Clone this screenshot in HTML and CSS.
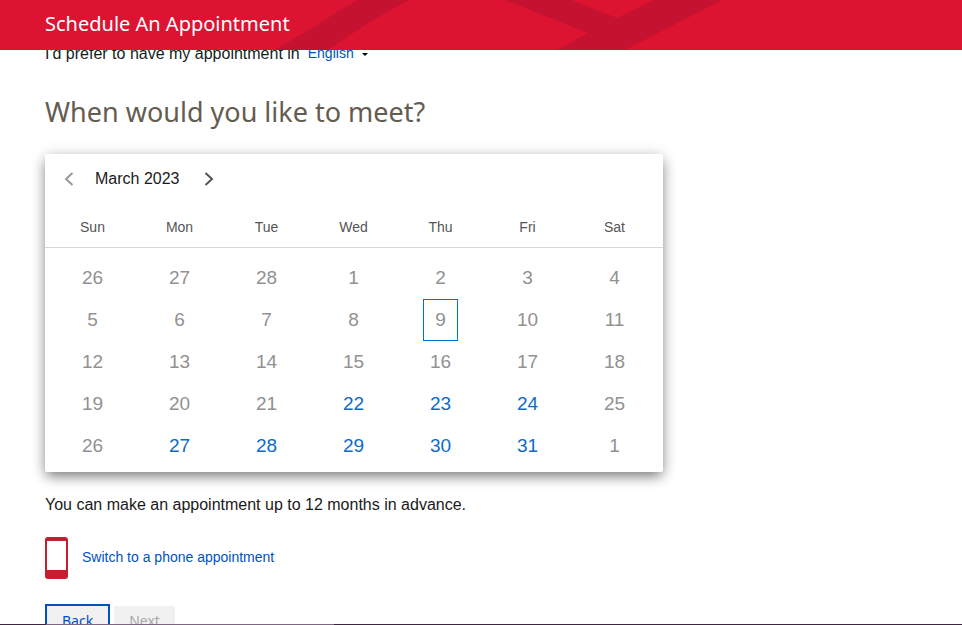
FILE: index.html
```
<!DOCTYPE html>
<html lang="en">

<head>
    <meta charset="UTF-8">
    <meta name="viewport" content="width=device-width, initial-scale=1.0">
    <title>Schedule An Appointment</title>
    <link rel="stylesheet" href="styles.css">
</head>

<body>
    <header class="header">
        <svg class="header-pattern" width="480" height="50" viewBox="0 0 480 50" aria-hidden="true">
            <path fill="#c41230" d="M0 50 L45 23 Q65 10 83 0 H134 L105 16 Q85 28 53 50 Z" />
            <path fill="#c41230" d="M230 0 H296 L342 18 L379 0 H447 L350 50 H282 L313 33 Z" />
        </svg>
        <h1 class="header-title">Schedule An Appointment</h1>
    </header>

    <main class="content">
        <div class="language">
            <label for="language">I'd prefer to have my appointment in</label>
            <select id="language" class="language-select">
                <option>English</option>
                <option>Spanish</option>
            </select>
        </div>

        <h2 class="question">When would you like to meet?</h2>

        <section class="calendar">
            <div class="calendar-nav">
                <button class="arrow" type="button" aria-label="Previous month" disabled>
                    <svg width="10" height="14" viewBox="0 0 10 14"><path d="M8.500 1 L2 7 L8.500 13" /></svg>
                </button>
                <span class="month">March 2023</span>
                <button class="arrow" type="button" aria-label="Next month">
                    <svg width="10" height="14" viewBox="0 0 10 14"><path d="M1.500 1 L8 7 L1.500 13" /></svg>
                </button>
            </div>
            <table class="days">
                <thead>
                    <tr><th>Sun</th><th>Mon</th><th>Tue</th><th>Wed</th><th>Thu</th><th>Fri</th><th>Sat</th></tr>
                </thead>
                <tbody>
                    <tr>
                        <td><button type="button" disabled>26</button></td>
                        <td><button type="button" disabled>27</button></td>
                        <td><button type="button" disabled>28</button></td>
                        <td><button type="button" disabled>1</button></td>
                        <td><button type="button" disabled>2</button></td>
                        <td><button type="button" disabled>3</button></td>
                        <td><button type="button" disabled>4</button></td>
                    </tr>
                    <tr>
                        <td><button type="button" disabled>5</button></td>
                        <td><button type="button" disabled>6</button></td>
                        <td><button type="button" disabled>7</button></td>
                        <td><button type="button" disabled>8</button></td>
                        <td><button class="today" type="button" disabled>9</button></td>
                        <td><button type="button" disabled>10</button></td>
                        <td><button type="button" disabled>11</button></td>
                    </tr>
                    <tr>
                        <td><button type="button" disabled>12</button></td>
                        <td><button type="button" disabled>13</button></td>
                        <td><button type="button" disabled>14</button></td>
                        <td><button type="button" disabled>15</button></td>
                        <td><button type="button" disabled>16</button></td>
                        <td><button type="button" disabled>17</button></td>
                        <td><button type="button" disabled>18</button></td>
                    </tr>
                    <tr>
                        <td><button type="button" disabled>19</button></td>
                        <td><button type="button" disabled>20</button></td>
                        <td><button type="button" disabled>21</button></td>
                        <td><button type="button">22</button></td>
                        <td><button type="button">23</button></td>
                        <td><button type="button">24</button></td>
                        <td><button type="button" disabled>25</button></td>
                    </tr>
                    <tr>
                        <td><button type="button" disabled>26</button></td>
                        <td><button type="button">27</button></td>
                        <td><button type="button">28</button></td>
                        <td><button type="button">29</button></td>
                        <td><button type="button">30</button></td>
                        <td><button type="button">31</button></td>
                        <td><button type="button" disabled>1</button></td>
                    </tr>
                </tbody>
            </table>
        </section>

        <p class="note">You can make an appointment up to 12 months in advance.</p>

        <div class="phone">
            <svg width="23" height="42" viewBox="0 0 23 42" aria-hidden="true">
                <rect width="23" height="42" rx="3" fill="#c41f30" />
                <rect x="2" y="4" width="19" height="29" fill="#fff" />
            </svg>
            <a href="#">Switch to a phone appointment</a>
        </div>

        <div class="actions">
            <button class="btn btn-back" type="button">Back</button>
            <button class="btn" type="button" disabled>Next</button>
        </div>
    </main>

    <div class="bottom-line"></div>
</body>

</html>
```

FILE: styles.css
```
* {
    box-sizing: border-box;
    margin: 0;
    padding: 0;
}

body {
    height: 100vh;
    overflow: hidden;
    background: #fff;
    color: #1a1a1a;
    font: 16px/20px "Liberation Sans", Arial, sans-serif;
}

button {
    border: none;
    background: none;
    font: inherit;
    cursor: pointer;
}

button:disabled {
    cursor: default;
}

.header {
    position: fixed;
    top: 0;
    left: 0;
    right: 0;
    z-index: 2;
    height: 50px;
    padding: 0 45px 2px;
    display: flex;
    align-items: center;
    background: #dc1431;
    overflow: hidden;
}

.header-pattern {
    position: absolute;
    top: 0;
    left: 275px;
}

.header-title {
    position: relative;
    color: #fff;
    font: 400 20px/28px "Noto Sans", sans-serif;
}

.content {
    max-width: 708px;
    padding: 44px 45px 0;
}

.language {
    display: flex;
    align-items: center;
    gap: 8px;
}

.language-select {
    appearance: none;
    width: 60px;
    padding-bottom: 2px;
    border: none;
    background: url("data:image/svg+xml,%3Csvg xmlns='http://www.w3.org/2000/svg' width='6' height='3'%3E%3Cpath d='M0 0h6L3 3z'/%3E%3C/svg%3E") no-repeat right center;
    color: #0052c2;
    font: 14px/18px "Liberation Sans", Arial, sans-serif;
}

.question {
    margin-top: 28px;
    color: #645c50;
    font: 400 27px/40px "Noto Sans", sans-serif;
}

.calendar {
    margin-top: 22px;
    padding-bottom: 5px;
    border-radius: 2px;
    background: #fff;
    box-shadow: 0 6px 12px -2px rgba(0, 0, 0, .42), 0 2px 16px rgba(0, 0, 0, .2);
}

.calendar-nav {
    display: flex;
    align-items: center;
    height: 50px;
    padding: 0 19px;
}

.month {
    margin: 0 24px 0 21px;
}

.arrow {
    display: flex;
}

.arrow path {
    fill: none;
    stroke: #555;
    stroke-width: 2;
}

.arrow:disabled path {
    stroke: #999;
}

.days {
    display: block;
}

.days thead,
.days tbody {
    display: block;
}

.days tr {
    display: flex;
    padding: 0 5px 0 4px;
}

.days th,
.days td {
    flex: 1;
    text-align: center;
}

.days thead tr {
    border-bottom: 1px solid #d8d8d8;
    margin-bottom: 9px;
}

.days th {
    padding: 13px 0 10px;
    color: #555;
    font-size: 14px;
    font-weight: 400;
}

.days td button {
    width: 35px;
    height: 42px;
    color: #0c6bc9;
    font-size: 19px;
}

.days td button:disabled {
    color: #919191;
}

.days .today {
    border: 1px solid #0073cf;
}

.note {
    margin-top: 23px;
}

.phone {
    display: flex;
    align-items: center;
    gap: 14px;
    margin-top: 22px;
    font-size: 14px;
}

.phone a {
    padding-bottom: 2px;
    color: #0052c2;
    text-decoration: none;
}

.actions {
    display: flex;
    align-items: center;
    gap: 4px;
    margin-top: 25px;
}

.btn {
    height: 32px;
    padding: 0 15px 2px;
    background: #f1f1f1;
    font: 14px/20px "Noto Sans", sans-serif;
}

.btn:disabled {
    color: #aaa;
}

.btn-back {
    height: 36px;
    border: 2px solid #0052c2;
    color: #0052c2;
}

.bottom-line {
    position: fixed;
    left: 0;
    right: 0;
    bottom: 0;
    z-index: 2;
    height: 1px;
    background: linear-gradient(90deg, #3d2440 0 46px, #7d6480 46px 334px, #3d2440 334px);
}
```
